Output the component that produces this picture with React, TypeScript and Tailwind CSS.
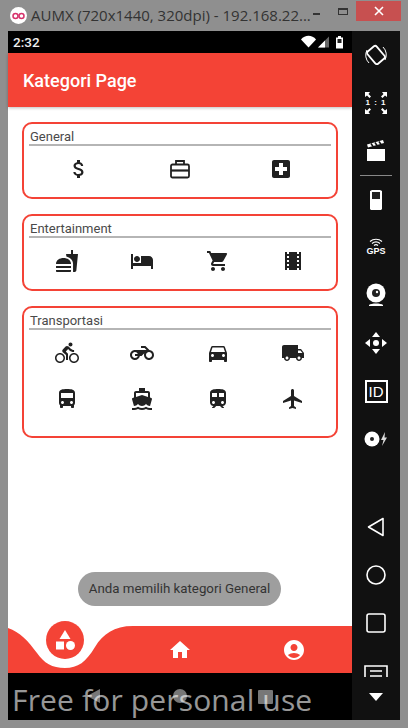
import {
  MdAttachMoney,
  MdLocalHospital,
  MdFastfood,
  MdHotel,
  MdShoppingCart,
  MdLocalMovies,
  MdDirectionsBike,
  MdDirectionsCar,
  MdLocalShipping,
  MdDirectionsBus,
  MdDirectionsBoat,
  MdTrain,
  MdFlight,
  MdHome,
  MdAccountCircle,
  MdCategory,
} from "react-icons/md"
import type { ReactNode } from "react"

// the package's outlined briefcase has a clasp the picture doesn't have
function Briefcase({ size, color }: { size: number; color: string }) {
  return (
    <svg width={size} height={size} viewBox="0 0 24 24" fill="none" stroke={color} strokeWidth="1.8">
      <rect x="3" y="7.5" width="18" height="13" rx="1.5" />
      <path d="M8 7.5V4H16V7.5" />
      <path d="M3 13.5H21" strokeWidth="2.2" />
    </svg>
  )
}

function Motorcycle({ size, color }: { size: number; color: string }) {
  return (
    <svg width={size} height={size} viewBox="0 0 24 24" fill={color}>
      <path d="M19.44 9.03L15.41 5H11v2h3.59l2 2H5c-2.8 0-5 2.2-5 5s2.2 5 5 5c2.46 0 4.45-1.69 4.9-4h1.65l2.77-2.77c-.21.54-.32 1.14-.32 1.77 0 2.8 2.2 5 5 5s5-2.2 5-5c0-2.65-1.97-4.77-4.56-4.97zM7.82 15C7.4 16.15 6.28 17 5 17c-1.63 0-3-1.37-3-3s1.37-3 3-3c1.28 0 2.4.85 2.82 2H5v2h2.82zM19 17c-1.66 0-3-1.34-3-3s1.34-3 3-3 3 1.34 3 3-1.34 3-3 3z" />
    </svg>
  )
}

const sections = [
  {
    title: "General",
    cols: "grid-cols-3",
    height: "h-[77px]",
    icons: [MdAttachMoney, Briefcase, MdLocalHospital],
  },
  {
    title: "Entertainment",
    cols: "grid-cols-4",
    height: "h-[77px]",
    icons: [MdFastfood, MdHotel, MdShoppingCart, MdLocalMovies],
  },
  {
    title: "Transportasi",
    cols: "grid-cols-4",
    height: "h-[132px]",
    icons: [
      MdDirectionsBike,
      Motorcycle,
      MdDirectionsCar,
      MdLocalShipping,
      MdDirectionsBus,
      MdDirectionsBoat,
      MdTrain,
      MdFlight,
    ],
  },
]

function TitleBar() {
  return (
    <div className="h-[31px] flex items-center pl-[10px] relative">
      <div className="w-[17px] h-[17px] rounded-full bg-white flex items-center justify-center">
        <svg width="13" height="8" viewBox="0 0 13 8" fill="none" stroke="#d6336c" strokeWidth="1.5">
          <circle cx="3.5" cy="4" r="2.5" />
          <circle cx="9.5" cy="4" r="2.5" />
        </svg>
      </div>
      <span className="ml-[4px] text-[15px] text-[#333] font-['Open_Sans',sans-serif] whitespace-nowrap">
        AUMX (720x1440, 320dpi) - 192.168.22...
      </span>
      <div className="w-[7px] h-[2px] bg-[#333] absolute left-[313px] top-[13px]" />
      <div className="w-[10px] h-[7px] border border-t-2 border-[#333] absolute left-[338px] top-[8px]" />
      <div className="w-[45px] h-[20px] bg-[#c75050] absolute left-[356px] top-[1px] flex items-center justify-center">
        <svg width="10" height="10" viewBox="0 0 10 10" stroke="#fff" strokeWidth="1.6">
          <path d="M1 1L9 9M9 1L1 9" />
        </svg>
      </div>
    </div>
  )
}

function StatusBar() {
  return (
    <div className="h-[22px] bg-black flex items-center justify-between pl-[5px] pr-[7px] shrink-0">
      <span className="text-[13.5px] font-medium text-[#eee] font-['Roboto',sans-serif]">2:32</span>
      <svg width="44" height="14" viewBox="0 0 44 14">
        <path d="M0 4.5C4-.5 11-.5 15 4.5L7.5 12.5Z" fill="#fff" />
        <path d="M17 12.5L28 1.5V12.5Z" fill="#666" />
        <path d="M17 12.5L24 5.5V12.5Z" fill="#fff" />
        <path d="M35 2.5H37V1H40V2.5H42V13.5H35Z" fill="#fff" />
        <rect x="36.5" y="4" width="4" height="4" fill="#222" />
      </svg>
    </div>
  )
}

function CategoryCard({ title, cols, height, icons }: (typeof sections)[number]) {
  return (
    <div className={`${height} border-2 border-[#f44336] rounded-[10px] px-[5px] pt-[5px]`}>
      <div className="h-[17px] pl-[1px] border-b-2 border-[#b5b5b5] text-[13px] leading-[16px] text-[#4a4a4a] font-['Roboto',sans-serif]">
        {title}
      </div>
      <div className={`grid ${cols} auto-rows-[46px]`}>
        {icons.map((Icon, i) => (
          <div key={i} className="flex items-center justify-center">
            <Icon size={24} color="#212121" />
          </div>
        ))}
      </div>
    </div>
  )
}

function BottomNav() {
  return (
    <div className="h-[47px] relative shrink-0">
      <svg width="344" height="47" viewBox="0 0 344 47" className="block">
        <path
          d="M0 2C12 6 20 15 29 27C36 37 44 42 57 42C70 42 78 36 87 21C95 8 106 0 125 0H344V47H0Z"
          fill="#f44336"
        />
      </svg>
      <div className="absolute left-[38px] top-[-5px] w-[38px] h-[38px] rounded-full bg-[#f44336] flex items-center justify-center">
        <MdCategory size={24} color="#fff" />
      </div>
      <div className="absolute left-[160px] top-[12px]">
        <MdHome size={24} color="#fff" />
      </div>
      <div className="absolute left-[274px] top-[12px]">
        <MdAccountCircle size={24} color="#fff" />
      </div>
    </div>
  )
}

function SoftKeys() {
  return (
    <div className="h-[47px] bg-black relative shrink-0 overflow-hidden">
      <svg width="344" height="47" viewBox="0 0 344 47" className="block">
        <path d="M79 23L92 16V30Z" fill="#777" />
        <circle cx="172" cy="23" r="7" fill="#777" />
        <rect x="250" y="17" width="15" height="14" rx="1" fill="#777" />
      </svg>
      <span className="absolute left-[4px] top-[7px] text-[30px] leading-[40px] tracking-[0.15px] font-normal text-white/60 whitespace-nowrap font-['Open_Sans',sans-serif]">
        Free for personal use
      </span>
    </div>
  )
}

function SideItem({ children, className = "h-[48px]" }: { children: ReactNode; className?: string }) {
  return <div className={`${className} flex items-center justify-center shrink-0`}>{children}</div>
}

function Sidebar() {
  return (
    <div className="w-[48px] bg-[#111] flex flex-col overflow-hidden text-white font-['Liberation_Sans',sans-serif]">
      <SideItem>
        <svg width="24" height="24" viewBox="0 0 24 24" fill="none" stroke="#fff">
          <rect x="6" y="4" width="12" height="16" rx="2" strokeWidth="1.8" transform="rotate(-40 12 12)" />
          <path d="M3 7A11 11 0 0 0 5 20M21 17A11 11 0 0 0 19 4" strokeWidth="1" />
        </svg>
      </SideItem>
      <SideItem>
        <div className="relative w-[24px] h-[24px] flex items-center justify-center">
          <svg width="24" height="24" viewBox="0 0 24 24" fill="#fff" className="absolute inset-0">
            <path d="M1 1H6L4.5 3L7 5.5L5.5 7L3 4.5L1 6Z" />
            <path d="M23 1H18L19.5 3L17 5.5L18.5 7L21 4.5L23 6Z" />
            <path d="M1 23H6L4.5 21L7 18.5L5.5 17L3 19.5L1 18Z" />
            <path d="M23 23H18L19.5 21L17 18.5L18.5 17L21 19.5L23 18Z" />
          </svg>
          <span className="text-[8px] font-bold tracking-[1px] whitespace-nowrap">1 : 1</span>
        </div>
      </SideItem>
      <SideItem>
        <svg width="20" height="22" viewBox="0 0 20 22" fill="#fff">
          <path d="M1 9H19V21H1Z" />
          <path d="M1 4.5L17 0L18 3L2 7.5Z" />
          <path d="M5 3.5L7 6.5M9 2.5L11 5.5M13 1.5L15 4.5" stroke="#111" strokeWidth="1.5" />
        </svg>
      </SideItem>
      <div className="h-0 relative shrink-0">
        <div className="absolute left-[8px] w-[32px] h-px bg-[#888]" />
      </div>
      <SideItem>
        <svg width="12" height="21" viewBox="0 0 12 21">
          <path d="M2 1H10L12 2V20L11 21H1L0 20V2Z" fill="#fff" />
          <rect x="2" y="3" width="8" height="7" fill="#222" />
        </svg>
      </SideItem>
      <SideItem>
        <div className="flex flex-col items-center">
          <svg width="14" height="9" viewBox="0 0 14 9" fill="none" stroke="#fff" strokeWidth="1.2">
            <path d="M1 3.5C4.5 0.5 9.5 0.5 13 3.5M3 5.5C5.5 3.5 8.5 3.5 11 5.5M5 7.5C6.2 6.5 7.8 6.5 9 7.5" />
          </svg>
          <span className="text-[9px] leading-[9px] font-bold">GPS</span>
        </div>
      </SideItem>
      <SideItem>
        <svg width="20" height="24" viewBox="0 0 20 24">
          <circle cx="10" cy="10" r="9.5" fill="#fff" />
          <circle cx="10" cy="10" r="4" fill="#222" />
          <circle cx="11" cy="9" r="1.2" fill="#fff" />
          <path d="M3 22C5 20 15 20 17 22V23H3Z" fill="#fff" />
        </svg>
      </SideItem>
      <SideItem>
        <svg width="24" height="24" viewBox="0 0 24 24" fill="#fff">
          <path d="M12 1L16 6H8Z" />
          <path d="M12 23L8 18H16Z" />
          <path d="M1 12L6 8V16Z" />
          <path d="M23 12L18 16V8Z" />
          <circle cx="12" cy="12" r="3" />
        </svg>
      </SideItem>
      <SideItem>
        <div className="w-[23px] h-[23px] border-2 border-white flex items-center justify-center text-[15px] leading-none">
          ID
        </div>
      </SideItem>
      <SideItem>
        <svg width="24" height="16" viewBox="0 0 24 16">
          <circle cx="8" cy="8" r="7.5" fill="#fff" />
          <circle cx="8" cy="8" r="2" fill="#222" />
          <path d="M21 1L17 9H19.5L18 15L23 6.5H20.5Z" fill="#ddd" />
        </svg>
      </SideItem>
      <div className="h-[40px] shrink-0" />
      <SideItem>
        <svg width="18" height="20" viewBox="0 0 18 20" fill="none" stroke="#fff" strokeWidth="1.6">
          <path d="M16 1.5V18.5L1.5 10Z" strokeLinejoin="round" />
        </svg>
      </SideItem>
      <SideItem>
        <svg width="20" height="20" viewBox="0 0 20 20" fill="none" stroke="#fff" strokeWidth="1.6">
          <circle cx="10" cy="10" r="9" />
        </svg>
      </SideItem>
      <SideItem>
        <svg width="20" height="20" viewBox="0 0 20 20" fill="none" stroke="#fff" strokeWidth="1.6">
          <rect x="1" y="1" width="18" height="18" rx="2" />
        </svg>
      </SideItem>
      <SideItem className="h-[30px]">
        <svg width="24" height="12" viewBox="0 0 24 12" fill="none" stroke="#fff" strokeWidth="1.6" className="self-end">
          <path d="M1 12V1H23V12M6 6H18M6 11H18" />
        </svg>
      </SideItem>
      <SideItem className="h-[31px] pt-[9px]">
        <svg width="14" height="8" viewBox="0 0 14 8" fill="#fff">
          <path d="M0 0H14L7 8Z" />
        </svg>
      </SideItem>
    </div>
  )
}

export default function App() {
  return (
    <div className="w-[408px] h-[728px] bg-[#8f8f8f] flex flex-col overflow-hidden">
      <TitleBar />
      <div className="flex h-[689px] pl-[8px] pr-[8px]">
        <div className="w-[344px] bg-white flex flex-col relative">
          <StatusBar />
          <div className="h-[54px] bg-[#f44336] flex items-center pl-[15px] shadow-[0_1px_3px_rgba(0,0,0,0.25)] shrink-0">
            <span className="text-[18px] font-medium text-white font-['Roboto',sans-serif]">Kategori Page</span>
          </div>
          <div className="flex-1 flex flex-col gap-[15px] px-[14px] pt-[15px]">
            {sections.map((section) => (
              <CategoryCard key={section.title} {...section} />
            ))}
          </div>
          <BottomNav />
          <SoftKeys />
          <div className="absolute left-[70px] top-[541px] w-[203px] h-[34px] rounded-full bg-[#9e9e9e] flex items-center justify-center text-[13.3px] text-[#333] font-['Roboto',sans-serif] whitespace-nowrap">
            Anda memilih kategori General
          </div>
        </div>
        <Sidebar />
      </div>
    </div>
  )
}
